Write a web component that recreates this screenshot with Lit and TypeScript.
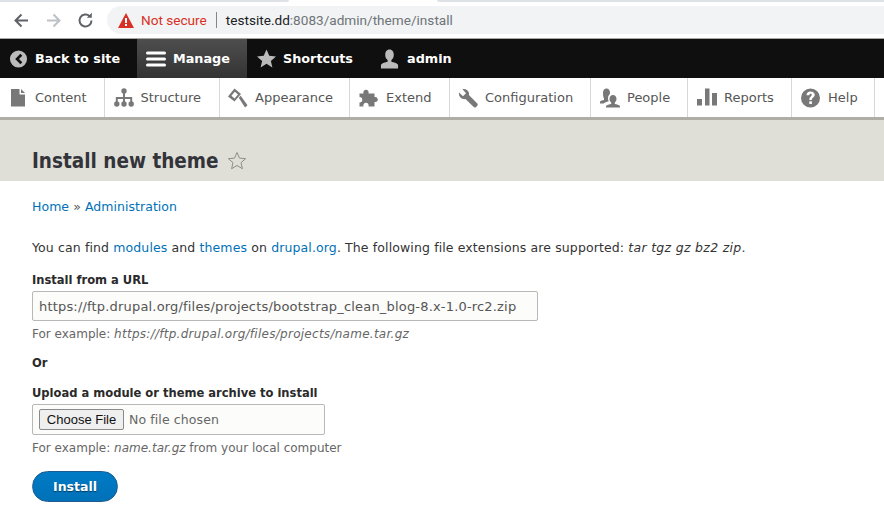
import { LitElement, html, css, svg } from "lit";
import { customElement } from "lit/decorators.js";

const trayIcons: Record<string, unknown> = {
  content: svg`<path d="M3 1h8.500v5.500H17V18.500H3z"/><path d="M13 1l4 4h-4z"/>`,
  structure: svg`<circle cx="10" cy="3" r="2.700"/><circle cx="2.800" cy="16" r="2.700"/><circle cx="10" cy="16" r="2.700"/><circle cx="17.200" cy="16" r="2.700"/><path d="M9 3h2v6h7.200v5h-2V11H11v3H9v-3H3.800v3h-2V9H9z"/>`,
  appearance: svg`<path fill-rule="evenodd" d="M0 8.500 6.500 0.500l6.500 5.500-6.500 7.500z M6.800 3.800 3.400 7.800l3.200 2.700 3.400-4z"/><path d="m10.800 9.800 1.900-2 6.800 9.400-2.500 2.200z"/>`,
  extend: svg`<path d="M0.500 5.500H4.500a2.700 2.700 0 1 1 5 0H15.500V9a2.600 2.600 0 1 1 0 5V18.500H9.500a2.700 2.700 0 1 0-5 0H0.500V14.500a2.600 2.600 0 1 0 0-5.500z"/>`,
  configuration: svg`<path d="M1 4.500 5 8.200l3-3L4.500 1.200C7 .2 10.500 2 11 5c.2 1-.1 2-.1 2L19.300 15.500c1 1 .1 2.200-.6 3-.7.7-2 1.500-3 .5L7.500 11S6.500 11.300 5.500 11.100C2.500 10.500.3 7.500 1 4.500z"/>`,
  people: svg`<path d="M13 7c2.300 0 3.500 1.800 3.500 4 0 1.500-.7 2.800-1.700 3.500V16c2 .4 4 1 5.200 2v1.500H6V18c1.200-1 3.200-1.600 5.200-2v-1.500c-1-.7-1.700-2-1.700-3.500 0-2.200 1.200-4 3.500-4z"/><path d="M6.500 0.500C8.700.5 10 2.200 10 4.500c0 .6-.1 1.200-.3 1.700-1 .8-1.700 2.400-1.700 4.300 0 1 .3 2 .7 2.800-2 .6-3.900 1.300-5 2.200H0v-2c1-.8 2.500-1.200 4-1.500v-1.500C3.300 9.500 3 7.700 3 4.500 3 2.200 4.300.5 6.500.5z"/>`,
  reports: svg`<path d="M0 11h5v6.500H0zM8 .500h4.500v17H8zM15 5h5v12.500h-5z"/>`,
  help: svg`<path fill-rule="evenodd" d="M9.500 0.500a9.500 9.500 0 1 1 0 19 9.500 9.500 0 0 1 0-19zM5.500 7.300h2.800c.1-1 .5-1.500 1.300-1.500s1.200.5 1.200 1.200c0 1.300-2.500 1.800-2.500 4.300v.6h2.500v-.3c0-1.800 2.900-2.300 2.900-4.900 0-2-1.700-3.300-4.100-3.300-2.500 0-4.100 1.600-4.100 3.900zM8.300 13.300v2.800h2.600v-2.800z"/>`,
};

const tray = [
  { key: "content", label: "Content", w: 105, p: 8 },
  { key: "structure", label: "Structure", w: 115, p: 8.500 },
  { key: "appearance", label: "Appearance", w: 130, p: 8 },
  { key: "extend", label: "Extend", w: 100, p: 9 },
  { key: "configuration", label: "Configuration", w: 141, p: 8 },
  { key: "people", label: "People", w: 97, p: 9 },
  { key: "reports", label: "Reports", w: 104, p: 9 },
  { key: "help", label: "Help", w: 83, p: 9 },
];

@customElement("app-root")
export class AppRoot extends LitElement {
  static styles = css`
    :host { display: block; width: 884px; height: 524px; overflow: hidden; background: #fff; font-family: "DejaVu Sans", sans-serif; color: #333; }
    a { color: #0071b8; text-decoration: none; }
    .tabstrip { height: 2px; display: flex; background: #fff; }
    .tab-a { width: 289px; background: #dee1e6; border-radius: 0 0 6px 0; }
    .tab-b { width: 148px; }
    .tab-c { flex: 1; background: #dee1e6; border-radius: 0 0 0 6px; }
    .chrome { height: 37px; box-sizing: border-box; padding: 4px 0; display: flex; align-items: center; background: #fff; border-bottom: 1px solid #a8a8a8; }
    .nav { width: 107px; flex: none; display: flex; align-items: center; padding-left: 11px; gap: 11px; box-sizing: border-box; }
    .nav svg { width: 21px; height: 21px; flex: none; }
    .omni { flex: 1; height: 28px; background: #f1f3f4; border-radius: 14px 0 0 14px; display: flex; align-items: center; padding-left: 11px; font: 13.600px Roboto, sans-serif; white-space: nowrap; }
    .omni svg { width: 16px; height: 15px; margin-right: 7px; }
    .ns { color: #d93025; }
    .sep { width: 1px; height: 16px; background: #80868b; margin: 0 9px; }
    .host { color: #202124; }
    .path { color: #6f7378; }
    .bar { height: 39px; background: #0f0f0f; display: flex; align-items: stretch; color: #fff; font-weight: 700; font-size: 12.800px; }
    .bar .it { display: flex; align-items: center; gap: 7px; white-space: nowrap; box-sizing: border-box; }
    .bar .back { width: 137px; padding-left: 9px; }
    .bar .manage { width: 110px; padding-left: 9px; background: linear-gradient(#4e4e4e, #333); }
    .bar .short { width: 123px; padding-left: 10px; }
    .bar .user { padding-left: 10px; gap: 8px; }
    .bar svg { width: 19px; height: 20px; fill: #bbb; flex: none; }
    .bar .manage svg { width: 20px; fill: #fff; }
    .tray { height: 39px; display: flex; background: #fff; border-bottom: 3px solid #aeaea6; font-size: 13px; color: #565656; }
    .tray .t { display: flex; align-items: center; gap: 7px; box-sizing: border-box; border-right: 1px solid #d8d8d8; white-space: nowrap; }
    .tray svg { width: 20px; height: 20px; fill: #787878; flex: none; }
    .head { height: 61px; background: #dfdfd8; box-sizing: border-box; padding: 28px 32px 0; display: flex; align-items: flex-start; }
    h1 { margin: 0; font-family: "DejaVu Sans Condensed", "DejaVu Sans", sans-serif; font-stretch: condensed; font-size: 20.500px; font-weight: 700; line-height: 26px; color: #33333a; white-space: nowrap; }
    .head svg { width: 20px; height: 20px; margin: 3px 0 0 8px; fill: none; stroke: #8e8e84; }
    main { padding: 18px 32px 0; font-size: 12.500px; }
    .crumb { line-height: 16px; height: 16px; color: #555; letter-spacing: 0.05px; }
    .intro { margin: 25px 0 0; line-height: 16px; color: #333; white-space: nowrap; letter-spacing: 0.12px; }
    .intro em { letter-spacing: 0.3px; }
    label, .or { display: block; font-family: "DejaVu Sans Condensed", "DejaVu Sans", sans-serif; font-stretch: condensed; font-weight: 700; font-size: 12.800px; line-height: 16px; color: #2a2a2a; }
    .l1 { margin-top: 16px; }
    .field { box-sizing: border-box; width: 506px; height: 30px; margin-top: 3px; padding: 0 6px; border: 1px solid #b8b8b8; border-radius: 2px; background: #fcfcfa; display: flex; align-items: center; color: #555; white-space: nowrap; font-size: 13px; letter-spacing: 0.18px; }
    .desc { font-size: 12px; line-height: 16px; color: #666; margin-top: 5px; white-space: nowrap; }
    .url { letter-spacing: 0.27px; }
    .or { margin-top: 13px; }
    .l2 { margin-top: 14px; }
    .file { box-sizing: border-box; width: 293px; height: 31px; margin-top: 3px; padding: 0 6px; border: 1px solid #b8b8b8; border-radius: 2px; background: #fcfcfa; display: flex; align-items: center; gap: 5px; color: #666; letter-spacing: 0.1px; }
    .choose { box-sizing: border-box; height: 21px; width: 85px; padding: 0; border: 1px solid #8a8a8a; border-radius: 2px; background: #efefef; font: 13px "Liberation Sans", sans-serif; color: #111; letter-spacing: 0; }
    .install { display: block; margin-top: 15px; box-sizing: border-box; width: 86px; height: 31px; border: 1px solid #1e5c90; border-radius: 20px; background: linear-gradient(#007bc6, #0071b8); color: #fff; font: 700 12.500px "DejaVu Sans", sans-serif; padding: 0; text-shadow: 0 1px 1px rgba(0,0,0,.5); }
  `;

  render() {
    return html`
      <div class="tabstrip"><div class="tab-a"></div><div class="tab-b"></div><div class="tab-c"></div></div>
      <div class="chrome">
        <div class="nav">
          <svg viewBox="0 0 21 21" fill="none" stroke="#5f6368" stroke-width="2"><path d="M17 10.500H5M10.500 4.500l-6 6 6 6"/></svg>
          <svg viewBox="0 0 21 21" fill="none" stroke="#bdc1c6" stroke-width="2"><path d="M4 10.500h12M10.500 4.500l6 6-6 6"/></svg>
          <svg viewBox="0 0 21 21" fill="none" stroke="#5f6368" stroke-width="2"><path d="M16.500 10.500a6 6 0 1 1-1.800-4.300"/><path d="M16.800 2.800v5h-5" fill="#5f6368" stroke="none"/></svg>
        </div>
        <div class="omni">
          <svg viewBox="0 0 16 15"><path fill="#d93025" d="M8 0l8 15H0z"/><path fill="#fff" d="M7 5h2v5H7zM7 11h2v2H7z"/></svg>
          <span class="ns">Not secure</span><span class="sep"></span><span class="host">testsite.dd</span><span class="path">:8083/admin/theme/install</span>
        </div>
      </div>
      <nav class="bar">
        <div class="it back"><svg viewBox="0 0 20 20"><path fill-rule="evenodd" d="M10 1a9 9 0 1 1 0 18 9 9 0 0 1 0-18zM12 4.500 6.500 10l5.500 5.500 2-2L10.500 10 14 6.500z"/></svg>Back to site</div>
        <div class="it manage"><svg viewBox="0 0 20 20"><path d="M1.500 2.500h17a1.500 1.500 0 0 1 0 3h-17a1.500 1.500 0 0 1 0-3zM1.500 8.500h17a1.500 1.500 0 0 1 0 3h-17a1.500 1.500 0 0 1 0-3zM1.500 14.500h17a1.500 1.500 0 0 1 0 3h-17a1.500 1.500 0 0 1 0-3z"/></svg>Manage</div>
        <div class="it short"><svg viewBox="0 0 20 20"><path d="M10 0l2.900 6.600 7.100.7-5.400 4.700 1.600 7L10 15l-6.200 4 1.600-7L0 7.300l7.100-.7z"/></svg>Shortcuts</div>
        <div class="it user"><svg viewBox="0 0 20 20"><path d="M10 0c3 0 4.500 2.500 4.500 5.500 0 2.500-1 4.500-2.500 5.500v2c2.500.5 5.500 1.500 7 3v4H1v-4c1.500-1.500 4.500-2.500 7-3v-2C6.500 10 5.500 8 5.500 5.500 5.500 2.500 7 0 10 0z"/></svg>admin</div>
      </nav>
      <nav class="tray">
        ${tray.map(
          (t) => html`<div class="t" style="width:${t.w}px;padding-left:${t.p}px"><svg viewBox="0 0 20 20">${trayIcons[t.key]}</svg>${t.label}</div>`
        )}
      </nav>
      <header class="head">
        <h1>Install new theme</h1>
        <svg viewBox="0 0 20 20"><path d="M10 1.500l2.500 5.600 6.100.6-4.600 4 1.400 6L10 14.500l-5.400 3.200 1.400-6-4.600-4 6.100-.6z"/></svg>
      </header>
      <main>
        <div class="crumb"><a href="#">Home</a> » <a href="#">Administration</a></div>
        <p class="intro">You can find <a href="#">modules</a> and <a href="#">themes</a> on <a href="#">drupal.org</a>. The following file extensions are supported: <em>tar tgz gz bz2 zip</em>.</p>
        <label class="l1">Install from a URL</label>
        <div class="field">https://ftp.drupal.org/files/projects/bootstrap_clean_blog-8.x-1.0-rc2.zip</div>
        <div class="desc">For example: <em class="url">https://ftp.drupal.org/files/projects/name.tar.gz</em></div>
        <div class="or">Or</div>
        <label class="l2">Upload a module or theme archive to install</label>
        <div class="file"><button class="choose">Choose File</button>No file chosen</div>
        <div class="desc">For example: <em>name.tar.gz</em> from your local computer</div>
        <button class="install">Install</button>
      </main>
    `;
  }
}
